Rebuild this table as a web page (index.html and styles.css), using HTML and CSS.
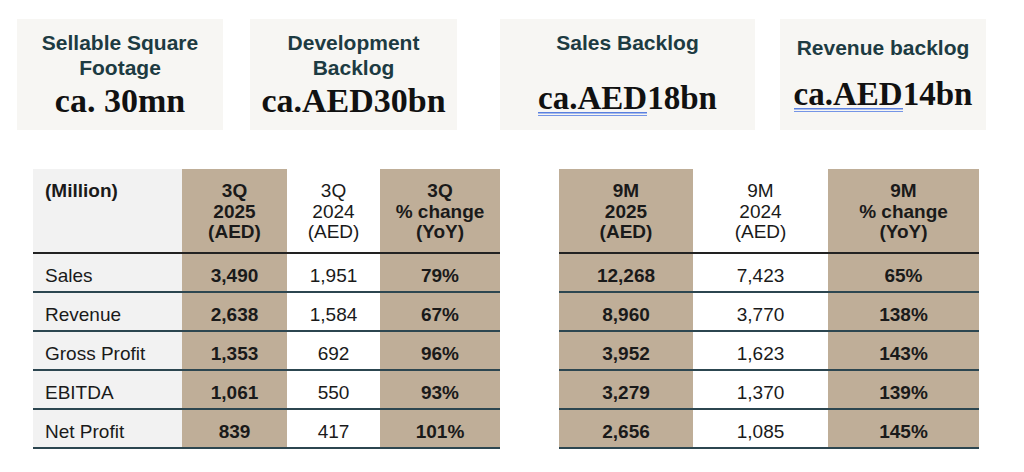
FILE: index.html
```html
<!DOCTYPE html>
<html lang="en">
<head>
<meta charset="utf-8">
<title>Key metrics</title>
<link rel="stylesheet" href="styles.css">
</head>
<body>
<div class="cards">
  <div class="card card-a">
    <div class="card-title">Sellable Square<br>Footage</div>
    <div class="card-value">ca. 30mn</div>
  </div>
  <div class="card card-b">
    <div class="card-title">Development<br>Backlog</div>
    <div class="card-value">ca.AED30bn</div>
  </div>
  <div class="card card-c">
    <div class="card-title">Sales Backlog</div>
    <div class="card-value"><span class="spell">ca.AED</span>18bn</div>
  </div>
  <div class="card card-d">
    <div class="card-title">Revenue backlog</div>
    <div class="card-value"><span class="spell">ca.AED</span>14bn</div>
  </div>
</div>

<div class="tables">
  <table class="fin fin-left">
    <colgroup>
      <col class="w-label"><col class="w-l2"><col class="w-l3"><col class="w-l4">
    </colgroup>
    <thead>
      <tr>
        <th class="label head-label">(Million)</th>
        <th class="tan">3Q<br>2025<br>(AED)</th>
        <th class="plain">3Q<br>2024<br>(AED)</th>
        <th class="tan">3Q<br>% change<br>(YoY)</th>
      </tr>
    </thead>
    <tbody>
      <tr><td class="label">Sales</td><td class="tan">3,490</td><td class="plain">1,951</td><td class="tan">79%</td></tr>
      <tr><td class="label">Revenue</td><td class="tan">2,638</td><td class="plain">1,584</td><td class="tan">67%</td></tr>
      <tr><td class="label">Gross Profit</td><td class="tan">1,353</td><td class="plain">692</td><td class="tan">96%</td></tr>
      <tr><td class="label">EBITDA</td><td class="tan">1,061</td><td class="plain">550</td><td class="tan">93%</td></tr>
      <tr><td class="label">Net Profit</td><td class="tan">839</td><td class="plain">417</td><td class="tan">101%</td></tr>
    </tbody>
  </table>

  <table class="fin fin-right">
    <colgroup>
      <col class="w-r1"><col class="w-r2"><col class="w-r3">
    </colgroup>
    <thead>
      <tr>
        <th class="tan">9M<br>2025<br>(AED)</th>
        <th class="plain">9M<br>2024<br>(AED)</th>
        <th class="tan">9M<br>% change<br>(YoY)</th>
      </tr>
    </thead>
    <tbody>
      <tr><td class="tan">12,268</td><td class="plain">7,423</td><td class="tan">65%</td></tr>
      <tr><td class="tan">8,960</td><td class="plain">3,770</td><td class="tan">138%</td></tr>
      <tr><td class="tan">3,952</td><td class="plain">1,623</td><td class="tan">143%</td></tr>
      <tr><td class="tan">3,279</td><td class="plain">1,370</td><td class="tan">139%</td></tr>
      <tr><td class="tan">2,656</td><td class="plain">1,085</td><td class="tan">145%</td></tr>
    </tbody>
  </table>
</div>
</body>
</html>
```

FILE: styles.css
```css
* { box-sizing: border-box; }

html, body {
  margin: 0;
  padding: 0;
  background: #ffffff;
}

body {
  width: 1024px;
  height: 472px;
  overflow: hidden;
  font-family: "Liberation Sans", Arial, sans-serif;
  color: #1a1a1a;
}

/* ---------- metric cards ---------- */
.cards {
  display: flex;
  align-items: flex-start;
  padding: 19px 0 0 17px;
}

.card {
  height: 111px;
  background: #f7f6f3;
  display: flex;
  flex-direction: column;
  align-items: center;
  text-align: center;
}

.card-a { width: 206px; padding-top: 11px; }
.card-b { width: 207px; margin-left: 27px; padding-top: 11px; }
.card-c { width: 255px; margin-left: 43px; padding-top: 11px; }
.card-d { width: 206px; margin-left: 25px; padding-top: 16px; }

.card-title {
  font-weight: 700;
  font-size: 21px;
  line-height: 25px;
  color: #1d3b42;
}

.card-value {
  font-family: "Liberation Serif", "Times New Roman", serif;
  font-weight: 700;
  font-size: 34px;
  line-height: 38px;
  color: #111111;
  margin-top: 2px;
  font-variant-numeric: oldstyle-nums;
}

.card-c .card-value { margin-top: 24px; font-size: 33px; }
.card-d .card-value { margin-top: 15px; font-size: 33px; }

.spell {
  background-image:
    linear-gradient(#5a80e0, #5a80e0),
    linear-gradient(#7595e6, #7595e6);
  background-repeat: no-repeat;
  background-size: 100% 1.5px, 100% 1.5px;
  background-position: 0 32px, 0 35px;
}

/* ---------- tables ---------- */
.tables {
  display: flex;
  align-items: flex-start;
  margin-top: 39px;
  padding-left: 33px;
  gap: 59px;
}

.fin {
  border-collapse: collapse;
  table-layout: fixed;
  font-size: 19px;
}

.fin-left { width: 467px; }
.fin-right { width: 420px; }

.w-label { width: 149px; }
.w-l2 { width: 105px; }
.w-l3 { width: 93px; }
.w-l4 { width: 120px; }
.w-r1 { width: 134px; }
.w-r2 { width: 135px; }
.w-r3 { width: 151px; }

.fin th {
  height: 84px;
  vertical-align: top;
  padding: 12px 2px 0;
  line-height: 20.5px;
  text-align: center;
  font-weight: 400;
}

.fin thead tr { border-bottom: 2px solid #222222; }
.fin tbody tr { border-bottom: 2px solid #2c4650; }

.fin td {
  height: 39px;
  padding: 6px 4px 0;
  text-align: center;
  vertical-align: middle;
  line-height: 20px;
}

.fin .label {
  text-align: left;
  padding-left: 12px;
  background: #f2f2f2;
  font-weight: 400;
}

.fin .head-label { font-weight: 700; }

.fin .tan {
  background: #bfae98;
  font-weight: 700;
}

.fin .plain {
  background: #ffffff;
  font-weight: 400;
}
```
